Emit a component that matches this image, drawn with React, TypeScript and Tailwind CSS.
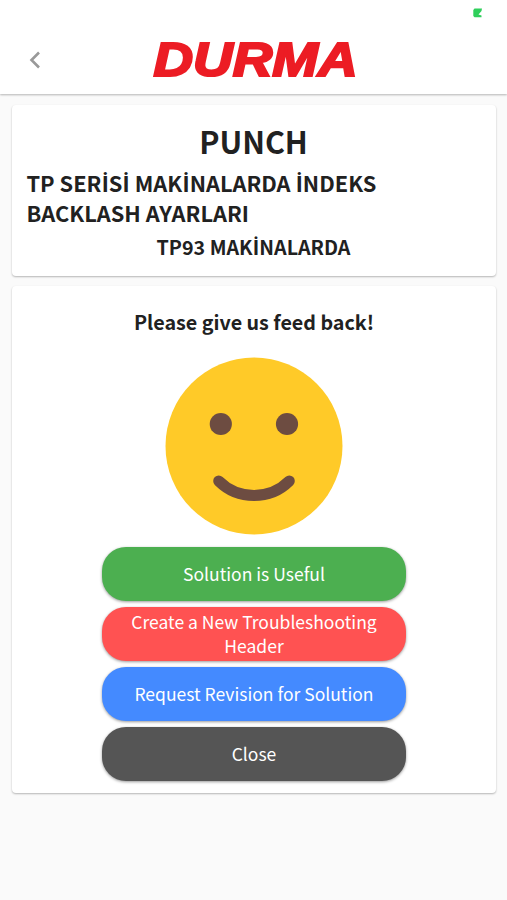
import React from "react";

const buttons = [
  { label: "Solution is Useful", color: "bg-[#4caf50]" },
  { label: "Create a New Troubleshooting Header", color: "bg-[#ff5252]" },
  { label: "Request Revision for Solution", color: "bg-[#448aff]" },
  { label: "Close", color: "bg-[#555555]" },
];

function TurkishText({ text }: { text: string }) {
  return (
    <>
      {text.split(/(İ)/).map((part, index) =>
        part === "İ" ? (
          <span
            key={index}
            className="px-[0.4px] font-[Roboto] text-[1.03em] leading-none"
          >
            İ
          </span>
        ) : (
          part
        )
      )}
    </>
  );
}

function Header() {
  return (
    <header className="relative h-[94px] bg-white shadow-[0_1px_2px_rgba(0,0,0,0.28)]">
      {/* Battery indicator */}
      <svg
        className="absolute left-[473px] top-[8px]"
        width="10"
        height="10"
        viewBox="0 0 10 10"
      >
        <path d="M1.5 0.5H9L8.5 3L5.5 6.5L8.5 7.5V9.3H1.5L0.3 8V2Z" fill="#2fcf5b" />
      </svg>

      <div className="flex h-[94px] items-center pt-[26px]">
        <button className="ml-[28px]" aria-label="Back">
          <svg width="14" height="18" viewBox="0 0 14 18" fill="none">
            <path d="M11 1.5L3.5 9L11 16.5" stroke="#999999" strokeWidth="2.6" />
          </svg>
        </button>
        <svg
          className="ml-[101px] overflow-visible"
          width="226"
          height="68"
          viewBox="0 0 226 68"
        >
          <text
            x="10.5"
            y="50"
            textLength="204"
            lengthAdjust="spacingAndGlyphs"
            fontFamily="Liberation Sans, sans-serif"
            fontSize="47.5"
            fontWeight="bold"
            fontStyle="italic"
            fill="#ec1c24"
            stroke="#ec1c24"
            strokeWidth="2.2"
          >
            DURMA
          </text>
        </svg>
      </div>
    </header>
  );
}

function Smiley() {
  return (
    <svg className="mx-auto" width="178" height="178" viewBox="0 0 178 178">
      <circle cx="89" cy="89" r="88.5" fill="#ffca28" />
      <circle cx="55.8" cy="67" r="11.1" fill="#6d4c41" />
      <circle cx="122" cy="67" r="11.1" fill="#6d4c41" />
      <path
        d="M53.7 124C73 143.3 105 143.3 124.3 124"
        fill="none"
        stroke="#6d4c41"
        strokeWidth="11"
        strokeLinecap="round"
      />
    </svg>
  );
}

function App() {
  return (
    <div className="min-h-screen bg-[#fafafa] font-['Noto_Sans_CJK_SC','Noto_Sans',sans-serif] text-[#212121]">
      <Header />

      <main className="pl-3 pr-[11px] pt-[11px]">
        {/* Machine Section */}
        <section className="h-[171px] rounded bg-white pl-[14.5px] pr-[15.5px] pt-[14px] font-bold shadow-[0_1px_2px_rgba(0,0,0,0.28)]">
          <h1 className="text-center text-[30.4px] leading-[44px]">PUNCH</h1>
          <h2 className="mt-[5px] text-[21.8px] leading-[30px]">
            <TurkishText text="TP SERİSİ MAKİNALARDA İNDEKS BACKLASH AYARLARI" />
          </h2>
          <h3 className="mt-[3px] text-center text-[19.7px] leading-[32px]">
            <TurkishText text="TP93 MAKİNALARDA" />
          </h3>
        </section>

        {/* Feedback Section */}
        <section className="mt-[10px] h-[507px] rounded bg-white pt-[20px] shadow-[0_1px_2px_rgba(0,0,0,0.28)]">
          <h3 className="mb-[19px] text-center text-[19.7px] font-bold leading-[32px]">
            Please give us feed back!
          </h3>
          <Smiley />
          <div className="mx-auto mt-[12px] flex w-[304px] flex-col gap-[6px]">
            {buttons.map((button) => (
              <button
                key={button.label}
                className={`h-[54px] rounded-[24px] px-5 text-[17.5px] leading-[24px] text-white shadow-[0_1px_3px_rgba(0,0,0,0.4)] ${button.color}`}
              >
                {button.label}
              </button>
            ))}
          </div>
        </section>
      </main>
    </div>
  );
}

export default App;
